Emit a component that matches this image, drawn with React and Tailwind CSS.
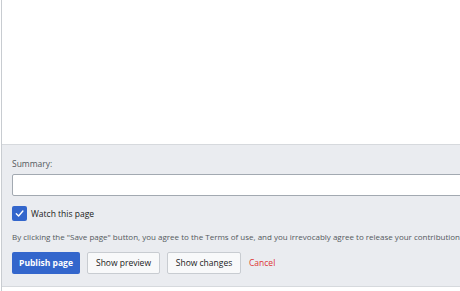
const Checkbox = () => (
  <span className="flex h-[15px] w-[15px] items-center justify-center rounded-[2px] bg-[#3366cc]">
    <svg width="11" height="11" viewBox="0 0 12 12" fill="none">
      <path d="M2.5 6.3 L5 8.7 L9.7 3.3" stroke="#fff" strokeWidth="1.5" strokeLinecap="round" strokeLinejoin="round" />
    </svg>
  </span>
);

export default function App() {
  return (
    <div className="flex h-[291px] w-[460px] flex-col overflow-hidden bg-white font-['Open_Sans',sans-serif]">
      <div className="ml-px flex flex-1 flex-col border-l border-[#c8ccd1]">
        <div className="h-[144px] bg-white" />
        <div className="border-y border-[#d6d9dd] bg-[#eaecf0] pl-[10px] pt-[13px] pb-[12px]">
          <div className="text-[8.5px] leading-[12px] text-[#54595d]">Summary:</div>
          <div className="mt-[4px] h-[22px] w-[500px] rounded-[2px] border border-[#a2a9b1] bg-white" />
          <label className="mt-[10px] flex items-center gap-[4px]">
            <Checkbox />
            <span className="text-[8.5px] leading-[15px] text-[#202122]">Watch this page</span>
          </label>
          <p className="mt-[10px] overflow-hidden whitespace-nowrap text-[8px] leading-[12px] text-[#54595d]">
            By clicking the "Save page" button, you agree to the Terms of use, and you irrevocably agree to release your contribution under the CC BY-SA 3.0 License
          </p>
          <div className="mt-[9px] flex items-center gap-[7px]">
            <button className="h-[22px] w-[68px] rounded-[2px] bg-[#3366cc] text-[8.5px] font-bold text-white">Publish page</button>
            <button className="h-[22px] w-[73px] rounded-[2px] border border-[#c8ccd1] bg-[#f8f9fa] text-[8.5px] text-[#202122]">Show preview</button>
            <button className="h-[22px] w-[74px] rounded-[2px] border border-[#c8ccd1] bg-[#f8f9fa] text-[8.5px] text-[#202122]">Show changes</button>
            <a className="ml-[1px] text-[8.5px] text-[#d33]">Cancel</a>
          </div>
        </div>
        <div className="flex-1 bg-white" />
      </div>
    </div>
  );
}
